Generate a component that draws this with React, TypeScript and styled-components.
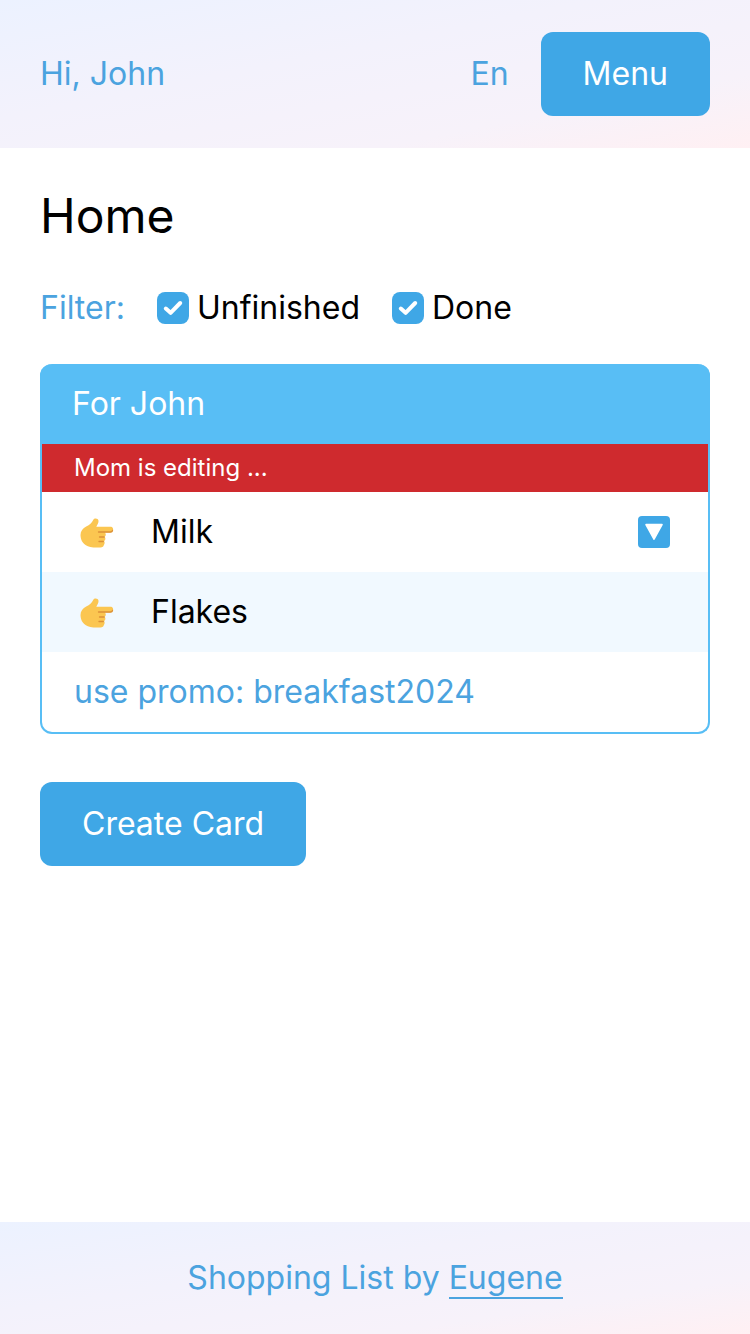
import React from "react";
import styled, { createGlobalStyle } from "styled-components";

const GlobalStyle = createGlobalStyle`
  * { box-sizing: border-box; }
  body {
    margin: 0;
    background: #fff;
    color: #000;
    font: 400 32px/48px Inter, sans-serif;
  }
`;

const accent = "#3fa7e6";
const sky = "#58bef5";
const link = "#4ba3df";
const wash = "linear-gradient(to bottom right, #ecf2ff, #f3f2fc 40%, #f7f2fa 75%, #fff0f3)";

const Page = styled.div`
  min-height: 100vh;
  display: flex;
  flex-direction: column;
`;

const Header = styled.header`
  height: 148px;
  padding: 0 40px;
  display: flex;
  align-items: center;
  background: ${wash};
  color: ${link};
`;

const Language = styled.span`
  margin-left: auto;
  margin-right: 32px;
`;

const Button = styled.button`
  height: 84px;
  padding: 0 42px;
  border: 0;
  border-radius: 12px;
  background: ${accent};
  color: #fff;
  font: inherit;
`;

const Main = styled.main`
  flex: 1;
  padding: 32px 40px;
`;

const Title = styled.h1`
  margin: 0;
  font-size: 48px;
  line-height: 72px;
  font-weight: 400;
`;

const Filters = styled.div`
  display: flex;
  align-items: center;
  gap: 32px;
  margin-top: 32px;
  color: ${link};
`;

const FilterOption = styled.label`
  display: flex;
  align-items: center;
  gap: 8px;
  color: #000;
`;

const CheckIcon = styled.svg`
  width: 32px;
  height: 32px;
  display: block;
`;

const Card = styled.section`
  margin: 32px 0 48px;
  border: 2px solid ${sky};
  border-top: 0;
  border-radius: 12px;
`;

const CardHeader = styled.div`
  height: 80px;
  margin: 0 -2px;
  padding: 0 32px;
  display: flex;
  align-items: center;
  border-radius: 12px 12px 0 0;
  background: ${sky};
  color: #fff;
`;

const EditingNotice = styled.div`
  height: 48px;
  padding: 0 32px;
  background: #cf2a2e;
  color: #fff;
  font-size: 24px;
`;

const Row = styled.div<{ $tinted?: boolean }>`
  height: 80px;
  padding: 0 38px 0 32px;
  display: flex;
  align-items: center;
  background: ${(p) => (p.$tinted ? "#f1f9ff" : "transparent")};
`;

const HandIcon = styled.svg`
  width: 45px;
  height: 40px;
  margin-right: 32px;
`;

const MoveIcon = styled.svg`
  width: 32px;
  height: 32px;
  margin-left: auto;
`;

const Note = styled(Row)`
  color: ${link};
`;

const Footer = styled.footer`
  height: 112px;
  display: flex;
  align-items: center;
  justify-content: center;
  gap: 9px;
  background: ${wash};
  color: ${link};
`;

const AuthorLink = styled.a`
  line-height: 38px;
  margin-top: 2px;
  border-bottom: 2px solid ${link};
  color: inherit;
`;

const Check = () => (
  <CheckIcon viewBox="0 0 32 32">
    <rect width="32" height="32" rx="8" fill={accent} />
    <path d="M8.800 16.500 13.600 20.800 23.200 11" fill="none" stroke="#fff" strokeWidth="4" strokeLinecap="round" strokeLinejoin="round" />
  </CheckIcon>
);

const Hand = () => (
  <HandIcon viewBox="0 0 45 40">
    <path
      d="M6.500 23c0-4 2.300-6.800 5.700-8.500 3.500-1.700 5.600-3.600 7-6.600 1.200-2.100 5-1.600 5.300.8.300 2-1.200 4.100-2.200 6.100H37c2.900 0 2.900 5.600 0 5.600h-6.200c1.400.9 1.400 3.600-.3 4.300 1.400 1 1.200 3.600-.5 4.200 1.100 1 .7 3.100-.2 4.100 0 1.600-1.400 2.300-3.300 2.400-3.700.3-7.200.2-10.200-.4C9.600 33.400 6.500 28.800 6.500 23Z"
      fill="#fbc651"
    />
    <path d="M24.500 20h12c1.200 0 1.800-.6 2-1.500M25.500 25h4.700M25 29.500h4.300" fill="none" stroke="#dc9138" strokeWidth="1.300" strokeLinecap="round" />
  </HandIcon>
);

const MoveDown = () => (
  <MoveIcon viewBox="0 0 32 32">
    <rect width="32" height="32" rx="4" fill={accent} />
    <path d="M8 8.600h16L16 23.200Z" fill="#fff" stroke="#fff" strokeWidth="1.600" strokeLinejoin="round" />
  </MoveIcon>
);

export default function App() {
  return (
    <Page>
      <GlobalStyle />
      <Header>
        <span>Hi, John</span>
        <Language>En</Language>
        <Button>Menu</Button>
      </Header>
      <Main>
        <Title>Home</Title>
        <Filters>
          <span>Filter:</span>
          <FilterOption><Check />Unfinished</FilterOption>
          <FilterOption><Check />Done</FilterOption>
        </Filters>
        <Card>
          <CardHeader>For John</CardHeader>
          <EditingNotice>Mom is editing ...</EditingNotice>
          <Row><Hand />Milk<MoveDown /></Row>
          <Row $tinted><Hand />Flakes</Row>
          <Note>use promo: breakfast2024</Note>
        </Card>
        <Button>Create Card</Button>
      </Main>
      <Footer>
        <span>Shopping List by</span>
        <AuthorLink>Eugene</AuthorLink>
      </Footer>
    </Page>
  );
}
